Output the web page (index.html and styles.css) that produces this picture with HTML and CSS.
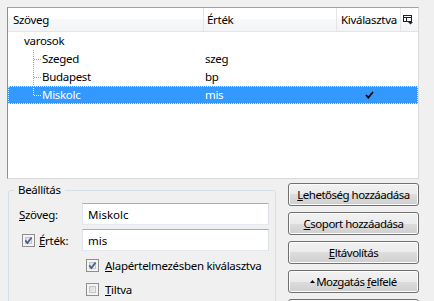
FILE: index.html
```html
<!DOCTYPE html>
<html lang="hu">
<head>
    <meta charset="UTF-8">
    <meta name="viewport" content="width=device-width, initial-scale=1.0">
    <title>Lehetőségek szerkesztése</title>
    <link rel="stylesheet" href="styles.css">
</head>
<body>
    <div class="window">
        <div class="tree">
            <div class="tree-head">
                <div class="col col-text">Szöveg</div>
                <div class="col col-value">Érték</div>
                <div class="col col-sel">Kiválasztva</div>
                <div class="col col-menu">
                    <svg width="11" height="10" viewBox="0 0 11 10">
                        <rect x="0.5" y="0.5" width="8" height="6" fill="none" stroke="#222"/>
                        <line x1="0.5" y1="2.5" x2="8.5" y2="2.5" stroke="#222"/>
                        <line x1="3.5" y1="2.5" x2="3.5" y2="6.5" stroke="#222"/>
                        <polygon points="5,7 10,7 7.5,9.5" fill="#222"/>
                    </svg>
                </div>
            </div>
            <div class="tree-row">
                <div class="cell cell-text group-name">varosok</div>
            </div>
            <div class="tree-row">
                <div class="cell cell-text child"><span class="branch"></span>Szeged</div>
                <div class="cell cell-value">szeg</div>
                <div class="cell cell-sel"></div>
            </div>
            <div class="tree-row">
                <div class="cell cell-text child"><span class="branch"></span>Budapest</div>
                <div class="cell cell-value">bp</div>
                <div class="cell cell-sel"></div>
            </div>
            <div class="tree-row selected">
                <div class="cell cell-text child"><span class="branch last"></span>Miskolc</div>
                <div class="cell cell-value">mis</div>
                <div class="cell cell-sel">
                    <svg class="tick" width="9" height="8" viewBox="0 0 9 8">
                        <path d="M1 4 L3.3 6.6 L8 1" fill="none" stroke="#000" stroke-width="1.8"/>
                    </svg>
                </div>
            </div>
        </div>

        <div class="bottom">
            <fieldset class="settings">
                <legend>Beállítás</legend>
                <div class="field-row">
                    <label class="field-label" for="optText"><span><u>S</u>zöveg:</span></label>
                    <input type="text" id="optText" value="Miskolc">
                </div>
                <div class="field-row">
                    <label class="field-label" for="optValue">
                        <span class="check checked"><svg width="11" height="11" viewBox="0 0 11 11"><path d="M2.3 5.4 L4.4 8 L8.6 2.4" fill="none" stroke="#4a5e8c" stroke-width="1.7"/></svg></span><span><u>É</u>rték:</span>
                    </label>
                    <input type="text" id="optValue" value="mis">
                </div>
                <div class="option first">
                    <span class="check checked"><svg width="11" height="11" viewBox="0 0 11 11"><path d="M2.3 5.4 L4.4 8 L8.6 2.4" fill="none" stroke="#4a5e8c" stroke-width="1.7"/></svg></span><span><u>A</u>lapértelmezésben kiválasztva</span>
                </div>
                <div class="option">
                    <span class="check"></span><span><u>T</u>iltva</span>
                </div>
            </fieldset>

            <div class="buttons">
                <button class="btn"><u>L</u>ehetőség hozzáadása</button>
                <button class="btn"><u>C</u>soport hozzáadása</button>
                <button class="btn"><u>E</u>ltávolítás</button>
                <button class="btn"><svg class="arrow" width="5" height="3" viewBox="0 0 5 3"><polygon points="0,3 2.5,0 5,3" fill="#000"/></svg>Mozgatás <u>f</u>elfelé</button>
                <button class="btn"></button>
            </div>
        </div>
    </div>
</body>
</html>
```

FILE: styles.css
```css
body {
    margin: 0;
    background: #f0f0f0;
    font-family: "Noto Sans", "Open Sans", sans-serif;
    font-size: 11.5px;
    letter-spacing: -0.3px;
    color: #000;
    overflow: hidden;
}
.window {
    padding: 7px 0 0 7px;
    width: 412px;
}

/* lista */
.tree {
    height: 172px;
    box-sizing: border-box;
    border: 1px solid;
    border-color: #a0a0a0 #dadada #dadada #8e8e8e;
    background: #fff;
}
.tree-head {
    display: flex;
    height: 23px;
    line-height: 23px;
    border-bottom: 1px solid #e5e5e5;
    background: linear-gradient(#ffffff, #ffffff 50%, #f7f8f9 50%, #f3f4f6);
}
.col {
    box-sizing: border-box;
    border-right: 1px solid #e5e5e5;
    white-space: nowrap;
    overflow: hidden;
}
.col-text { width: 196px; padding-left: 5px; }
.col-value { width: 133px; padding-left: 3px; }
.col-sel { width: 64px; padding-left: 4px; }
.col-menu {
    flex: 1;
    border-right: none;
    display: flex;
    align-items: center;
    justify-content: center;
    padding-right: 3px;
}
.tree-row {
    display: flex;
    height: 18px;
    line-height: 18px;
    --line: #a0a0a0;
}
.cell {
    box-sizing: border-box;
    white-space: nowrap;
}
.cell-text { width: 196px; }
.cell-value { width: 133px; padding-left: 1px; }
.cell-sel {
    width: 64px;
    display: flex;
    align-items: center;
    justify-content: center;
}
.group-name { padding-left: 16px; }
.child { padding-left: 25px; }
.branch {
    display: inline-block;
    vertical-align: top;
    width: 9px;
    height: 18px;
    background-image:
        repeating-linear-gradient(to bottom, var(--line) 0 1px, transparent 1px 2px),
        repeating-linear-gradient(to right, var(--line) 0 1px, transparent 1px 2px);
    background-size: 1px 18px, 8px 1px;
    background-position: 0 0, 1px 9px;
    background-repeat: no-repeat;
}
.branch.last {
    background-size: 1px 10px, 8px 1px;
}
.tree-row.selected {
    background: #3399ff;
    color: #fff;
    outline: 1px dotted #f3e9b2;
    outline-offset: -1px;
    --line: #ffffff;
}

/* also resz */
.bottom {
    display: flex;
    align-items: flex-start;
    margin-top: 4px;
}
.settings {
    margin: 0 0 0 1px;
    padding: 6px 6px 0 10px;
    width: 268px;
    height: 130px;
    box-sizing: border-box;
    border: 1px solid #d5dfe5;
    border-radius: 3px;
}
.settings legend {
    padding: 0 4px;
    margin-left: -5px;
    line-height: 14px;
}
.field-row {
    display: flex;
    align-items: center;
    height: 22px;
    margin-bottom: 4px;
}
.field-label {
    width: 63px;
    display: flex;
    align-items: center;
    white-space: nowrap;
}
.field-row input {
    width: 187px;
    height: 22px;
    box-sizing: border-box;
    margin: 0;
    padding: 0 5px;
    border: 1px solid;
    border-color: #abadb3 #dbdfe6 #e3e9ef #e2e3ea;
    font: inherit;
    color: #000;
    outline: none;
}
.check {
    width: 13px;
    height: 13px;
    box-sizing: border-box;
    border: 1px solid #8f8f8f;
    background: linear-gradient(135deg, #cdd1d7, #f7f7f7);
    box-shadow: inset 0 0 0 2px #f4f4f4, inset 0 0 0 3px #c3c7cd;
    flex: none;
}
.check svg {
    display: block;
}
.field-label .check {
    margin: 0 4px 0 3px;
}
.option {
    display: flex;
    align-items: center;
    height: 24px;
    padding-left: 67px;
    white-space: nowrap;
}
.option.first {
    margin-top: -2px;
}
.option .check {
    margin-right: 6px;
}

.buttons {
    margin-left: auto;
    width: 131px;
    display: flex;
    flex-direction: column;
    gap: 6px;
}
.btn {
    height: 23px;
    padding: 0;
    border: 1px solid #707070;
    border-radius: 3px;
    background: linear-gradient(#f2f2f2, #ebebeb 50%, #dddddd 50%, #cfcfcf);
    box-shadow: inset 0 0 0 1px #fcfcfc;
    font: inherit;
    letter-spacing: -0.5px;
    color: #000;
    white-space: nowrap;
}
.btn .arrow {
    vertical-align: 3px;
    margin-right: 1px;
}
```
